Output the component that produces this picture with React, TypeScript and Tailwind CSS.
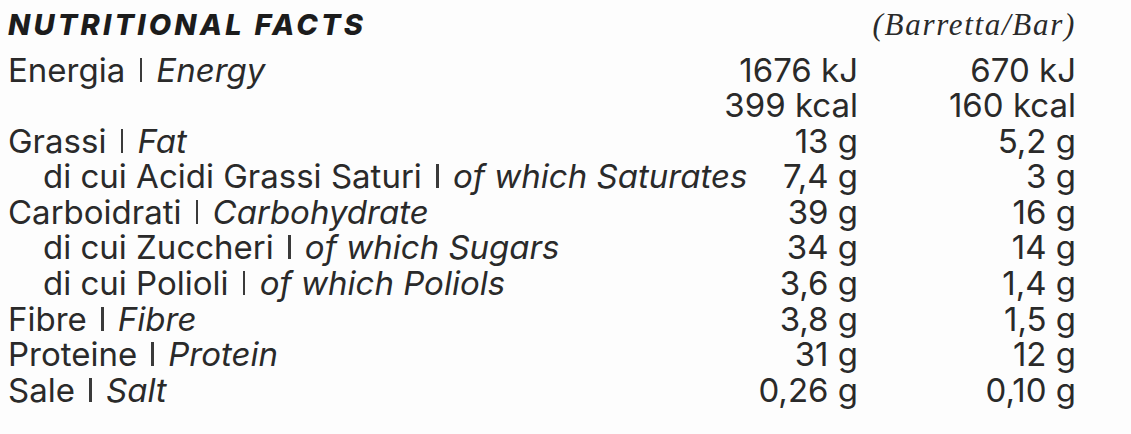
import React from 'react'

type Row = { it: string; en: string; a: string[]; b: string[]; sub?: boolean }

const rows: Row[] = [
  { it: 'Energia', en: 'Energy', a: ['1676 kJ', '399 kcal'], b: ['670 kJ', '160 kcal'] },
  { it: 'Grassi', en: 'Fat', a: ['13 g'], b: ['5,2 g'] },
  { it: 'di cui Acidi Grassi Saturi', en: 'of which Saturates', a: ['7,4 g'], b: ['3 g'], sub: true },
  { it: 'Carboidrati', en: 'Carbohydrate', a: ['39 g'], b: ['16 g'] },
  { it: 'di cui Zuccheri', en: 'of which Sugars', a: ['34 g'], b: ['14 g'], sub: true },
  { it: 'di cui Polioli', en: 'of which Poliols', a: ['3,6 g'], b: ['1,4 g'], sub: true },
  { it: 'Fibre', en: 'Fibre', a: ['3,8 g'], b: ['1,5 g'] },
  { it: 'Proteine', en: 'Protein', a: ['31 g'], b: ['12 g'] },
  { it: 'Sale', en: 'Salt', a: ['0,26 g'], b: ['0,10 g'] },
]

const App = () => {
  return (
    <div className="w-[1131px] h-[434px] bg-[#fdfdfd] text-[#2a2a2a] pl-[8px] pr-[55px] font-['Inter',sans-serif] overflow-hidden">
      <div className="flex items-baseline justify-between pt-[2px]">
        <h1 className="text-[29px] font-extrabold italic tracking-[3.2px] text-[#1c1c1c]">NUTRITIONAL FACTS</h1>
        <span className="font-['Liberation_Serif',serif] italic text-[31px] tracking-[1.7px] text-[#2a2a2a]">(Barretta/Bar)</span>
      </div>

      <div className="mt-[4px] text-[33px] leading-[35.6px]">
        {rows.map((r) => (
          <div key={r.it} className="grid grid-cols-[1fr_218px]">
            <div className="flex justify-between">
              <span className={r.sub ? 'pl-[35px] whitespace-nowrap' : 'whitespace-nowrap'}>
                {r.it} <span className="inline-block w-[2.5px] h-[24px] bg-[#3a3a3a] mx-[5px] align-baseline" /> <span className="italic">{r.en}</span>
              </span>
              <div className="flex flex-col items-end">
                {r.a.map((v) => (
                  <span key={v} className="whitespace-nowrap">{v}</span>
                ))}
              </div>
            </div>
            <div className="flex flex-col items-end">
              {r.b.map((v) => (
                <span key={v} className="whitespace-nowrap">{v}</span>
              ))}
            </div>
          </div>
        ))}
      </div>
    </div>
  )
}

export default App
